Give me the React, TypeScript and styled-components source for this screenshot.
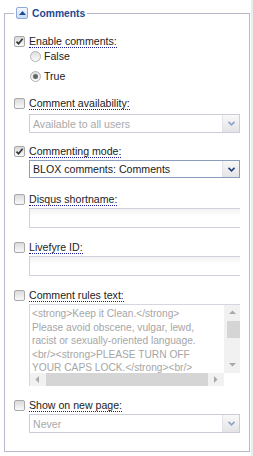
import React from "react";
import styled, { createGlobalStyle } from "styled-components";

const GlobalStyle = createGlobalStyle`
  html, body {
    margin: 0;
    padding: 0;
    background: #fff;
  }
  body {
    font-family: Tahoma, "Liberation Sans", Arial, sans-serif;
    font-size: 10.6px;
    color: #222;
  }
`;

const Page = styled.div`
  width: 253px;
  height: 456px;
  box-sizing: border-box;
  padding: 6px 0 0 4px;
  border-right: 2px solid #ececec;
`;

const Panel = styled.fieldset`
  margin: 0;
  width: 246px;
  height: 446px;
  box-sizing: border-box;
  border: 1px solid #b9b9cc;
  padding: 14px 8px 0 9px;
`;

const Legend = styled.legend`
  padding: 0 2px;
  height: 14px;
  display: flex;
  align-items: center;
  gap: 4px;
  font-weight: bold;
  font-size: 10.3px;
  color: #1b4a93;
`;

const Toggle = styled.span`
  width: 12px;
  height: 12px;
  box-sizing: border-box;
  border: 1px solid #8eabd9;
  border-radius: 2px;
  background: linear-gradient(#f7faff, #c6d9f3);
  display: flex;
  align-items: center;
  justify-content: center;
`;

const Field = styled.div<{ $top: number }>`
  margin-top: ${(p) => p.$top}px;
`;

const LabelRow = styled.label`
  display: flex;
  align-items: center;
  gap: 4px;
  height: 14px;
`;

const LabelText = styled.span`
  line-height: 12px;
  border-bottom: 1px dotted #1c1c96;
`;

const Box = styled.span`
  width: 11px;
  height: 11px;
  box-sizing: border-box;
  border: 1px solid #a8a8a8;
  border-radius: 2px;
  background: linear-gradient(#dadada, #fafafa);
  display: flex;
  align-items: center;
  justify-content: center;
  flex: none;
`;

const Control = styled.div<{ $top?: number }>`
  margin-left: 15px;
  margin-top: ${(p) => p.$top ?? 3}px;
`;

const RadioRow = styled.label<{ $top: number }>`
  display: flex;
  align-items: center;
  gap: 3px;
  height: 14px;
  margin: ${(p) => p.$top}px 0 0 16px;
`;

const Radio = styled.span<{ $checked?: boolean }>`
  width: 11px;
  height: 11px;
  box-sizing: border-box;
  border: 1px solid #b2b2b2;
  border-radius: 50%;
  background: linear-gradient(#dedede, #fbfbfb);
  display: flex;
  align-items: center;
  justify-content: center;
  &::after {
    content: "";
    width: 5px;
    height: 5px;
    border-radius: 50%;
    background: ${(p) => (p.$checked ? "#666" : "transparent")};
  }
`;

const Select = styled.div<{ $disabled?: boolean }>`
  display: flex;
  width: 211px;
  height: ${(p) => (p.$disabled ? 19 : 18)}px;
  box-sizing: border-box;
  border: 1px solid ${(p) => (p.$disabled ? "#cdcdda" : "#8a9cbc")};
  background: #fff;
  color: ${(p) => (p.$disabled ? "#a9a9a9" : "#222")};
`;

const SelectValue = styled.span`
  flex: 1;
  padding-left: 3px;
  display: flex;
  align-items: center;
  white-space: nowrap;
  overflow: hidden;
`;

const SelectArrow = styled.span`
  width: 16px;
  border-left: 1px solid #e2e2ea;
  background: linear-gradient(#f8f8f8, #e4e4e8);
  display: flex;
  align-items: center;
  justify-content: center;
`;

const TextInput = styled.input`
  display: block;
  width: 211px;
  height: 20px;
  box-sizing: border-box;
  margin: 0;
  padding: 0 3px;
  border: 1px solid #d0d0dc;
  border-right: none;
  background: linear-gradient(#f3f3f3, #fff 45%);
  font: inherit;
  outline: none;
`;

const RulesBox = styled.div`
  display: grid;
  grid-template-columns: 1fr 16px;
  grid-template-rows: 1fr 13px;
  width: 211px;
  height: 82px;
  box-sizing: border-box;
  border-top: 1px solid #d6d6e0;
  border-left: 1px solid #d6d6e0;
`;

const RulesText = styled.div`
  padding: 2px 0 0 2px;
  overflow: hidden;
  white-space: pre;
  font-size: 10.2px;
  line-height: 13.5px;
  color: #a6a6a6;
`;

const VScroll = styled.div`
  background: #f1f1f1;
  display: flex;
  flex-direction: column;
  align-items: flex-end;
`;

const HScroll = styled.div`
  background: #f1f1f1;
  display: flex;
  align-items: center;
`;

const ScrollArrow = styled.span`
  width: 16px;
  height: 16px;
  display: flex;
  align-items: center;
  justify-content: center;
  flex: none;
`;

const VThumb = styled.span`
  width: 13px;
  height: 17px;
  background: #d5d5d5;
`;

const HThumb = styled.span`
  flex: 1;
  height: 13px;
  background: #d5d5d5;
`;

const Spacer = styled.span`
  flex: 1;
`;

const Chevron = ({ dark }: { dark?: boolean }) => (
  <svg width="7" height="5" viewBox="0 0 7 5">
    <path d="M0.5 0.8 L3.5 3.8 L6.5 0.8" fill="none" stroke={dark ? "#22427a" : "#8ea3c6"} strokeWidth="1.6" />
  </svg>
);

const Check = () => (
  <svg width="9" height="9" viewBox="0 0 9 9">
    <path d="M1.5 4.6 L3.6 6.8 L7.6 1.8" fill="none" stroke="#333" strokeWidth="1.7" />
  </svg>
);

const Tri = ({ dir }: { dir: "up" | "down" | "left" | "right" }) => {
  const d = {
    up: "M1 5 L4.5 1.5 L8 5 Z",
    down: "M1 2 L8 2 L4.5 5.5 Z",
    left: "M5 1 L5 8 L1.5 4.5 Z",
    right: "M2 1 L2 8 L5.5 4.5 Z",
  }[dir];
  return (
    <svg width="9" height="9" viewBox="0 0 9 9">
      <path d={d} fill="#a9a9a9" />
    </svg>
  );
};

const CheckLabel = ({ text, checked }: { text: string; checked?: boolean }) => (
  <LabelRow>
    <Box>{checked && <Check />}</Box>
    <LabelText>{text}</LabelText>
  </LabelRow>
);

const Dropdown = ({ value, disabled }: { value: string; disabled?: boolean }) => (
  <Select $disabled={disabled}>
    <SelectValue>{value}</SelectValue>
    <SelectArrow>
      <Chevron dark={!disabled} />
    </SelectArrow>
  </Select>
);

const rules = [
  "<strong>Keep it Clean.</strong>",
  "Please avoid obscene, vulgar, lewd,",
  "racist or sexually-oriented language.",
  "<br/><strong>PLEASE TURN OFF",
  "YOUR CAPS LOCK.</strong><br/>",
].join("\n");

export default function App() {
  return (
    <Page>
      <GlobalStyle />
      <Panel>
        <Legend>
          <Toggle>
            <svg width="7" height="4" viewBox="0 0 7 4">
              <path d="M0 4 L3.5 0 L7 4 Z" fill="#1d4b99" />
            </svg>
          </Toggle>
          Comments
        </Legend>

        <Field $top={0}>
          <CheckLabel text="Enable comments:" checked />
          <RadioRow $top={1}>
            <Radio />
            False
          </RadioRow>
          <RadioRow $top={6}>
            <Radio $checked />
            True
          </RadioRow>
        </Field>

        <Field $top={13}>
          <CheckLabel text="Comment availability:" />
          <Control $top={4}>
            <Dropdown value="Available to all users" disabled />
          </Control>
        </Field>

        <Field $top={11}>
          <CheckLabel text="Commenting mode:" checked />
          <Control $top={2}>
            <Dropdown value="BLOX comments: Comments" />
          </Control>
        </Field>

        <Field $top={14}>
          <CheckLabel text="Disqus shortname:" />
          <Control $top={2}>
            <TextInput type="text" />
          </Control>
        </Field>

        <Field $top={12}>
          <CheckLabel text="Livefyre ID:" />
          <Control $top={2}>
            <TextInput type="text" />
          </Control>
        </Field>

        <Field $top={12}>
          <CheckLabel text="Comment rules text:" />
          <Control $top={2}>
            <RulesBox>
              <RulesText>{rules}</RulesText>
              <VScroll>
                <ScrollArrow>
                  <Tri dir="up" />
                </ScrollArrow>
                <VThumb />
                <Spacer />
                <ScrollArrow>
                  <Tri dir="down" />
                </ScrollArrow>
              </VScroll>
              <HScroll>
                <ScrollArrow>
                  <Tri dir="left" />
                </ScrollArrow>
                <HThumb />
                <ScrollArrow>
                  <Tri dir="right" />
                </ScrollArrow>
              </HScroll>
              <span />
            </RulesBox>
          </Control>
        </Field>

        <Field $top={12}>
          <CheckLabel text="Show on new page:" />
          <Control $top={2}>
            <Dropdown value="Never" disabled />
          </Control>
        </Field>
      </Panel>
    </Page>
  );
}
